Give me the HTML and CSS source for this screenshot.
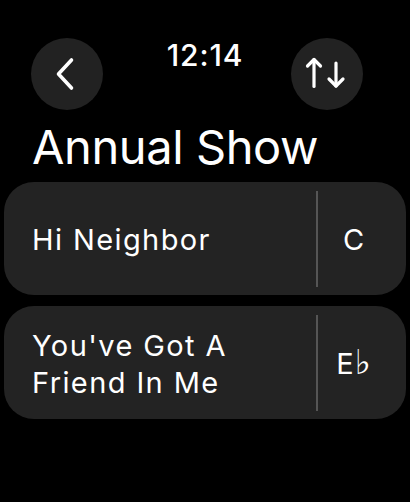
FILE: index.html
```html
<!DOCTYPE html>
<html>
<head>
<meta charset="utf-8">
<link rel="stylesheet" href="styles.css">
</head>
<body>
<div class="screen">
  <header class="top">
    <button class="circle back" aria-label="Back">
      <svg width="72" height="72" viewBox="0 0 72 72"><path d="M40.5 22 L27.5 36 L40.5 50" fill="none" stroke="#fff" stroke-width="3.6" stroke-linecap="round" stroke-linejoin="round"/></svg>
    </button>
    <div class="time">12:14</div>
    <button class="circle sort" aria-label="Sort">
      <svg width="72" height="72" viewBox="0 0 72 72" fill="none" stroke="#fff" stroke-width="3.2" stroke-linecap="round" stroke-linejoin="round">
        <path d="M23 21.5 V48.5"/><path d="M16.5 28 L23 21.5 L29.5 28"/>
        <path d="M45 25 V48"/><path d="M38 41 L45 48 L52 41"/>
      </svg>
    </button>
  </header>
  <h1 class="title">Annual Show</h1>
  <div class="list">
    <div class="card">
      <div class="name">Hi Neighbor</div>
      <div class="divider"></div>
      <div class="key">C</div>
    </div>
    <div class="card">
      <div class="name">You've Got A<br>Friend In Me</div>
      <div class="divider"></div>
      <div class="key">E<span class="flat">♭</span></div>
    </div>
  </div>
</div>
</body>
</html>
```
FILE: styles.css
```css
html, body {
  margin: 0;
  padding: 0;
  background: #000;
}
body {
  width: 410px;
  height: 502px;
  overflow: hidden;
  color: #fff;
  font-family: Inter, "Noto Sans", "DejaVu Sans", sans-serif;
}
.screen {
  display: flex;
  flex-direction: column;
}
.top {
  display: grid;
  grid-template-columns: 1fr auto 1fr;
  align-items: start;
  padding: 38px 47px 0 31px;
  height: 72px;
}
.circle {
  width: 72px;
  height: 72px;
  border-radius: 50%;
  background: #222222;
  border: none;
  padding: 0;
  margin: 0;
  display: flex;
}
.back { justify-self: start; }
.sort { justify-self: end; }
.time {
  font-size: 30px;
  line-height: 36px;
  font-weight: 500;
  margin-top: -1px;
  letter-spacing: 0.9px;
  transform: translateX(8px);
}
.title {
  margin: 9px 0 0 32px;
  font-size: 47px;
  line-height: 56px;
  font-weight: 400;
  letter-spacing: -0.4px;
}
.list {
  display: flex;
  flex-direction: column;
  gap: 11px;
  margin: 7px 4px 0 4px;
}
.card {
  height: 113px;
  background: #232323;
  border-radius: 30px;
  display: flex;
  align-items: center;
}
.name {
  flex: 1;
  padding-left: 28px;
  padding-top: 2px;
  font-size: 29px;
  line-height: 37px;
  letter-spacing: 1.4px;
}
.divider {
  align-self: stretch;
  width: 2px;
  margin: 9px 0 8px;
  background: #555;
}
.key {
  width: 72px;
  margin-right: 16px;
  text-align: center;
  font-size: 29px;
  line-height: 37px;
  padding-top: 2px;
  letter-spacing: 1px;
}
.flat {
  font-family: "DejaVu Sans", sans-serif;
  font-size: 34px;
  line-height: 0;
}
```
